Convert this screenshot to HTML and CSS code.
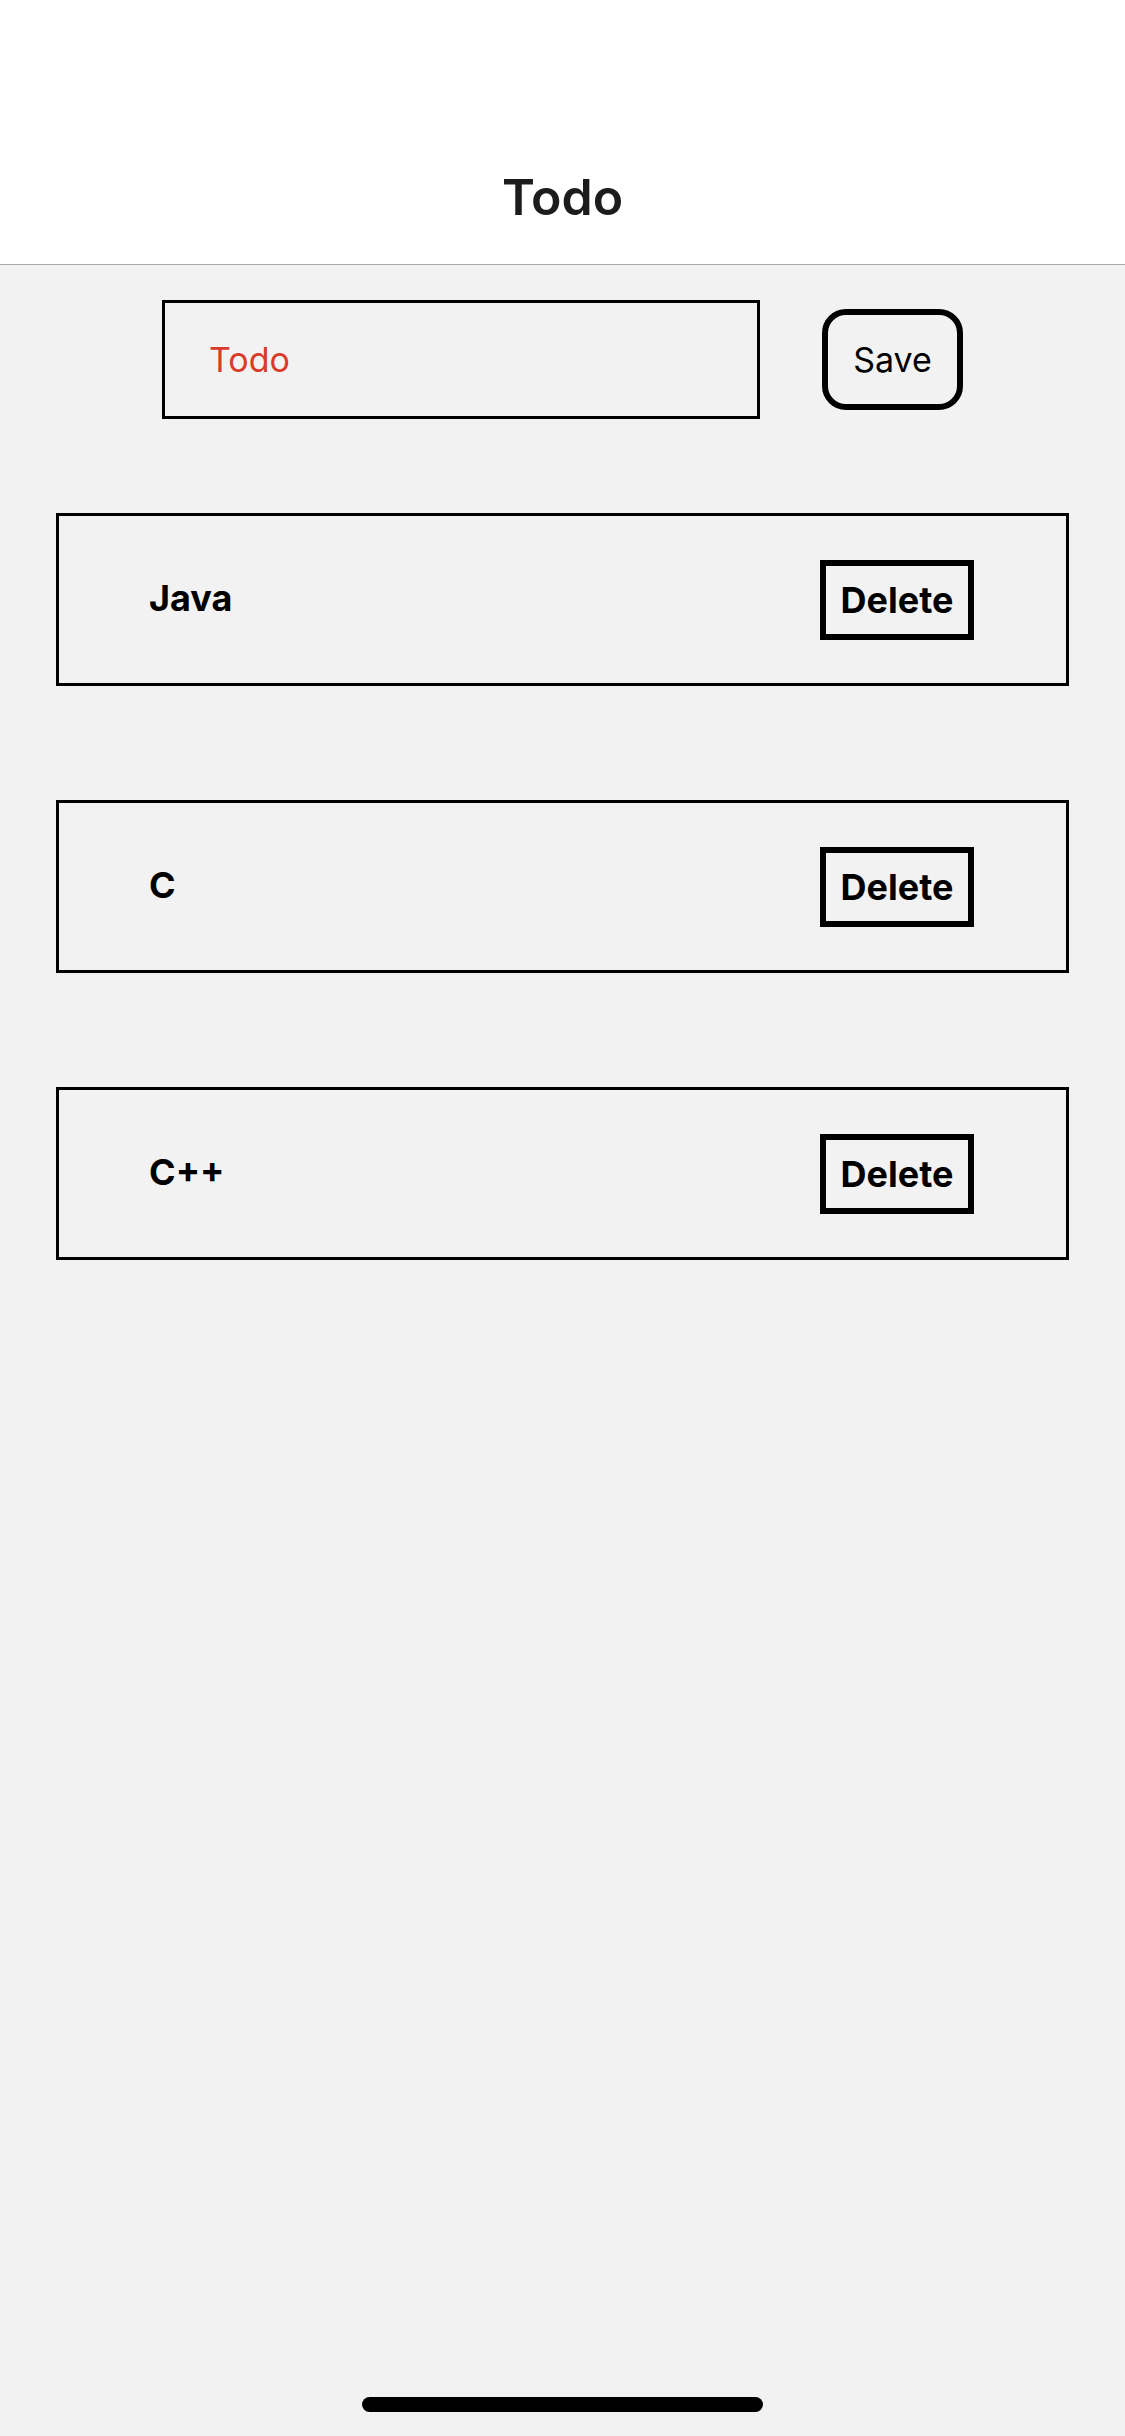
FILE: index.html
```html
<!DOCTYPE html>
<html lang="en">
<head>
<meta charset="utf-8">
<title>Todo</title>
<link rel="stylesheet" href="styles.css">
</head>
<body>
<div class="page">
  <header class="nav">
    <h1 class="nav-title">Todo</h1>
  </header>
  <div class="form-row">
    <input class="todo-input" type="text" placeholder="Todo">
    <button class="save-btn">Save</button>
  </div>
  <ul class="todo-list">
    <li class="todo-card"><span class="todo-text">Java</span><button class="delete-btn">Delete</button></li>
    <li class="todo-card"><span class="todo-text">C</span><button class="delete-btn">Delete</button></li>
    <li class="todo-card"><span class="todo-text">C++</span><button class="delete-btn">Delete</button></li>
  </ul>
  <div class="home-indicator"></div>
</div>
</body>
</html>
```

FILE: styles.css
```css
* { box-sizing: border-box; }
html, body {
  margin: 0;
  padding: 0;
  background: #f2f2f2;
  font-family: Inter, "Liberation Sans", sans-serif;
  color: #000;
}
.page {
  min-height: 2436px;
  display: flex;
  flex-direction: column;
}
.nav {
  background: #fff;
  height: 265px;
  border-bottom: 1px solid #a9a9a9;
  display: flex;
  align-items: flex-start;
  justify-content: center;
  padding-top: 167px;
}
.nav-title {
  margin: 0;
  font-size: 50px;
  line-height: 60px;
  font-weight: 600;
  color: #1c1c1c;
}
.form-row {
  display: flex;
  align-items: center;
  padding: 35px 0 0 162px;
  gap: 62px;
}
.todo-input {
  width: 598px;
  height: 119px;
  border: 3px solid #000;
  border-radius: 0;
  background: transparent;
  padding: 0 0 0 44px;
  margin: 0;
  font-family: inherit;
  font-size: 34px;
  color: #000;
  outline: none;
}
.todo-input::placeholder {
  color: #d93b2b;
  opacity: 1;
}
.save-btn {
  width: 141px;
  height: 101px;
  border: 6px solid #000;
  border-radius: 24px;
  background: transparent;
  font-family: inherit;
  font-size: 34px;
  color: #000;
  padding: 0;
  margin: 0;
}
.todo-list {
  list-style: none;
  margin: 94px 56px 0 56px;
  padding: 0;
  display: flex;
  flex-direction: column;
  gap: 114px;
}
.todo-card {
  height: 173px;
  border: 3px solid #000;
  display: flex;
  align-items: center;
  justify-content: space-between;
  padding: 0 92px 0 90px;
}
.todo-text {
  font-size: 36px;
  font-weight: 700;
  margin-top: -4px;
}
.delete-btn {
  width: 154px;
  height: 80px;
  border: 6px solid #000;
  border-radius: 0;
  background: transparent;
  font-family: inherit;
  font-size: 36px;
  font-weight: 700;
  color: #000;
  padding: 0;
  margin: 0;
}
.home-indicator {
  margin: auto auto 24px auto;
  width: 401px;
  height: 15px;
  border-radius: 8px;
  background: #000;
}
```
